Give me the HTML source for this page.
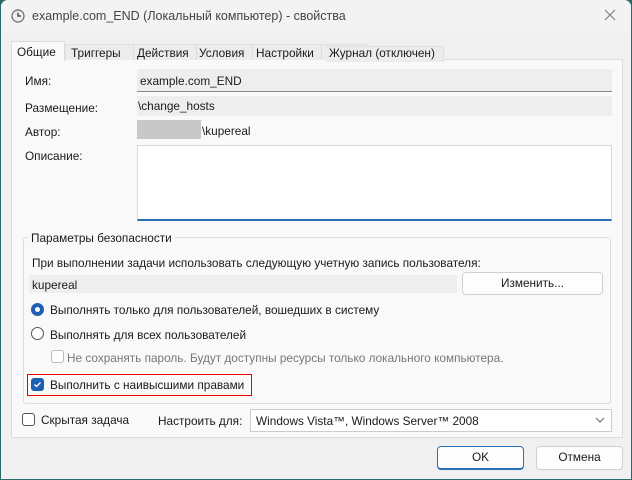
<!DOCTYPE html>
<html><head><meta charset="utf-8"><style>
*{box-sizing:border-box;margin:0;padding:0}
body{width:632px;height:480px;background:#2b6a66;font-family:"Liberation Sans",sans-serif;font-size:11.8px;color:#1a1a1a;position:relative;overflow:hidden}
.win{position:absolute;left:1px;top:0;width:630px;height:479px;background:#f0f0f0;border-radius:7px 7px 0 0}
.a{position:absolute;white-space:nowrap}
.field{position:absolute;background:#eeeeee}
.btn{position:absolute;background:#fdfdfd;border:1px solid #d0d0d0;border-radius:4px;text-align:center;line-height:20px}
.radio{position:absolute;width:13px;height:13px;border-radius:50%;border:1px solid #555;background:#fff}
.cb{position:absolute;width:13px;height:13px;border-radius:3px;border:1px solid #555;background:#fff}
</style></head><body>
<div class="win">
 <div class="a" style="left:0;top:0;width:630px;height:33px;background:#f3f3f3;border-radius:7px 7px 0 0"></div>
 <svg class="a" style="left:10px;top:9px" width="14" height="14"><circle cx="7" cy="7" r="6" fill="#eee" stroke="#666" stroke-width="1.2"/><path d="M7 3.5V7H10" stroke="#333" stroke-width="1.2" fill="none"/></svg>
 <div class="a" style="left:31px;top:9px;font-size:12.5px;color:#444">example.com_END (Локальный компьютер) - свойства</div>
 <svg class="a" style="left:603px;top:9px" width="12" height="12"><path d="M1 1L11 11M11 1L1 11" stroke="#777" stroke-width="1"/></svg>

 <div class="a" style="left:10px;top:59px;width:612px;height:379px;background:#f9f9f9;border:1px solid #dcdcdc"></div>
 <div class="a" style="left:10px;top:41px;width:54px;height:20px;background:#f9f9f9;border:1px solid #dcdcdc;border-bottom:none"></div>
 <div class="a" style="left:16px;top:45px">Общие</div>
 <div class="a" style="left:64px;top:44px;width:302px;height:16px;background:#ececec;border:1px solid #e0e0e0;border-bottom:none"></div>
 <div class="a" style="left:70px;top:46px">Триггеры</div>
 <div class="a" style="left:132px;top:44px;height:16px;border-left:1px solid #ddd"></div>
 <div class="a" style="left:136px;top:46px">Действия</div>
 <div class="a" style="left:195px;top:44px;height:16px;border-left:1px solid #ddd"></div>
 <div class="a" style="left:198px;top:46px">Условия</div>
 <div class="a" style="left:251px;top:44px;height:16px;border-left:1px solid #ddd"></div>
 <div class="a" style="left:255px;top:46px">Настройки</div>
 <div class="a" style="left:320px;top:44px;height:16px;border-left:1px solid #ddd"></div>
 <div class="a" style="left:325px;top:46px;width:118px;height:16px;background:#ececec;border-right:1px solid #e0e0e0;border-top:1px solid #e0e0e0"></div>
 <div class="a" style="left:328px;top:46px">Журнал (отключен)</div>

 <div class="a" style="left:24px;top:74px">Имя:</div>
 <div class="field" style="left:136px;top:69px;width:475px;height:23px;border-bottom:1px solid #888"></div>
 <div class="a" style="left:139px;top:74px">example.com_END</div>
 <div class="a" style="left:24px;top:101px">Размещение:</div>
 <div class="field" style="left:136px;top:96px;width:475px;height:20px"></div>
 <div class="a" style="left:137px;top:99px">\change_hosts</div>
 <div class="a" style="left:24px;top:125px">Автор:</div>
 <div class="a" style="left:136px;top:120px;width:64px;height:19px;background:#c8c8c8"></div>
 <div class="a" style="left:201px;top:124px">\kupereal</div>
 <div class="a" style="left:24px;top:149px">Описание:</div>
 <div class="a" style="left:136px;top:145px;width:475px;height:76px;background:#fff;border:1px solid #d8d8d8;border-bottom:2px solid #2a6fb8"></div>

 <div class="a" style="left:22px;top:237px;width:588px;height:167px;border:1px solid #dcdcdc;border-radius:3px"></div>
 <div class="a" style="left:27px;top:231px;background:#f9f9f9;padding:0 3px">Параметры безопасности</div>
 <div class="a" style="left:31px;top:256px">При выполнении задачи использовать следующую учетную запись пользователя:</div>
 <div class="field" style="left:28px;top:275px;width:428px;height:18px"></div>
 <div class="a" style="left:31px;top:278px">kupereal</div>
 <div class="btn" style="left:461px;top:272px;width:141px;height:23px">Изменить...</div>
 <div class="radio" style="left:30px;top:303px;border:4px solid #1d5fb0"></div>
 <div class="a" style="left:49px;top:303px">Выполнять только для пользователей, вошедших в систему</div>
 <div class="radio" style="left:30px;top:327px"></div>
 <div class="a" style="left:49px;top:328px">Выполнять для всех пользователей</div>
 <div class="cb" style="left:50px;top:350px;border-color:#bbb"></div>
 <div class="a" style="left:66px;top:351px;color:#777">Не сохранять пароль. Будут доступны ресурсы только локального компьютера.</div>
 <div class="a" style="left:26px;top:374px;width:225px;height:22px;border:1px solid #e00"></div>
 <div class="cb" style="left:30px;top:378px;background:#1d5fb0;border-color:#1d5fb0"></div>
 <svg class="a" style="left:30px;top:378px" width="13" height="13"><path d="M3.5 6.5L5.5 8.5L9.5 4.5" stroke="#fff" stroke-width="1.3" fill="none"/></svg>
 <div class="a" style="left:49px;top:378px">Выполнить с наивысшими правами</div>

 <div class="cb" style="left:21px;top:413px"></div>
 <div class="a" style="left:40px;top:413px">Скрытая задача</div>
 <div class="a" style="left:157px;top:414px">Настроить для:</div>
 <div class="a" style="left:249px;top:409px;width:362px;height:23px;background:#fff;border:1px solid #ccc"></div>
 <div class="a" style="left:255px;top:414px">Windows Vista™, Windows Server™ 2008</div>
 <svg class="a" style="left:594px;top:416px" width="10" height="8"><path d="M1 2L5 6L9 2" stroke="#666" fill="none"/></svg>

 <div class="btn" style="left:436px;top:446px;width:87px;height:24px;border:1px solid #2a6fb8;border-width:1px 1px 2px 1px">OK</div>
 <div class="btn" style="left:535px;top:446px;width:87px;height:24px">Отмена</div>
</div>
</body></html>
